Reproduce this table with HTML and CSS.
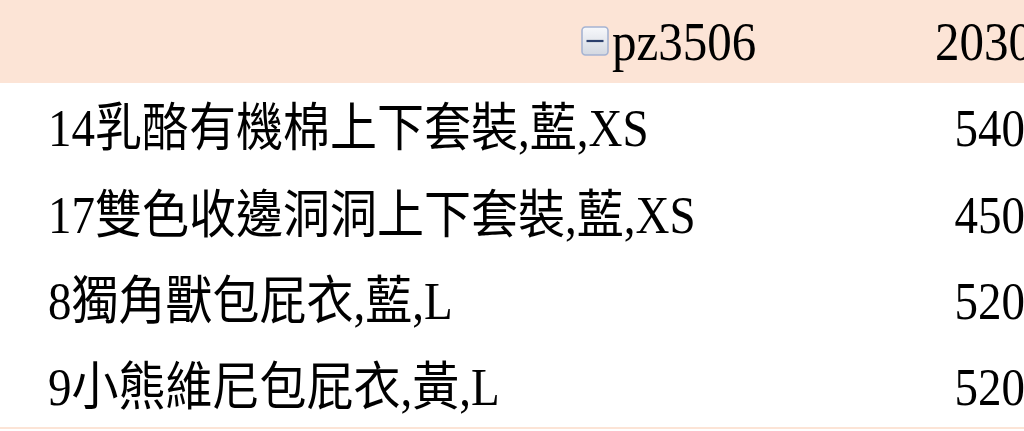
FILE: index.html
```html
<!DOCTYPE html>
<html lang="zh-Hant">
<head>
  <meta charset="UTF-8" />
  <title>樞紐分析表</title>
  <link rel="stylesheet" href="styles.css">
</head>
<body>
  <div class="pivot">
    <div class="head">
      <div class="group">
        <svg class="toggle" width="28" height="30" viewBox="0 0 28 30">
          <defs>
            <linearGradient id="btn" x1="0" y1="0" x2="0" y2="1">
              <stop offset="0" stop-color="#f7f8fb" />
              <stop offset="1" stop-color="#d3d8e1" />
            </linearGradient>
          </defs>
          <rect x="1" y="1" width="26" height="28" rx="3.5" fill="url(#btn)" stroke="#a5b3d2" stroke-width="1.6" />
          <line x1="5.5" y1="15" x2="22.5" y2="15" stroke="#2b3f6c" stroke-width="2.2" />
        </svg>
        <span class="text">pz3506</span>
      </div>
      <div class="value">2030</div>
    </div>

    <div class="row">
      <div class="name">14乳酪有機棉上下套裝,藍,XS</div>
      <div class="value">540</div>
    </div>
    <div class="row">
      <div class="name">17雙色收邊洞洞上下套裝,藍,XS</div>
      <div class="value">450</div>
    </div>
    <div class="row">
      <div class="name">8獨角獸包屁衣,藍,L</div>
      <div class="value">520</div>
    </div>
    <div class="row last">
      <div class="name">9小熊維尼包屁衣,黃,L</div>
      <div class="value">520</div>
    </div>
  </div>
</body>
</html>
```

FILE: styles.css
```css
body {
  margin: 0;
  width: 1024px;
  height: 431px;
  overflow: hidden;
  background: #fff;
  color: #000;
  font-family: "Liberation Serif", "Noto Sans CJK TC", serif;
  font-size: 47px;
  line-height: 47px;
}

.pivot {
  width: 1024px;
}

.head {
  height: 83px;
  background: #fce4d6;
  display: flex;
  align-items: center;
  justify-content: space-between;
  padding-left: 581px;
  font-size: 49px;
}

.group {
  display: flex;
  align-items: center;
  gap: 3px;
}

.toggle {
  display: block;
  margin-top: -1px;
}

.row {
  height: 86.5px;
  display: flex;
  align-items: center;
  justify-content: space-between;
  padding: 5px 0 0 48px;
  box-sizing: border-box;
}

.row.last {
  border-bottom: 2px solid #fce4d6;
}

.name,
.value,
.text {
  transform: scaleY(1.12);
}

.value {
  text-align: right;
  white-space: nowrap;
  margin-right: -1px;
}

.head .value {
  margin-right: -9px;
}
```
